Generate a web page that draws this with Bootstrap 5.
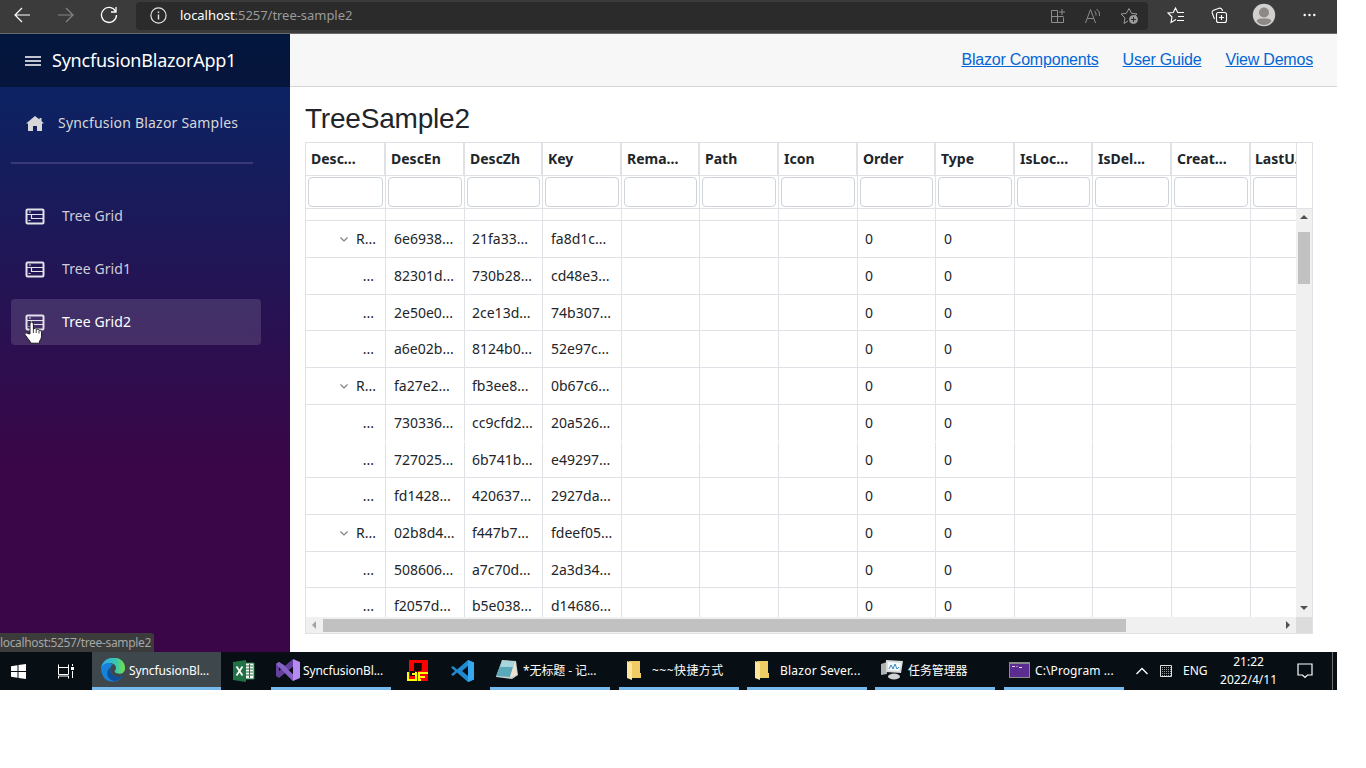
<!DOCTYPE html>
<html lang="en">
<head>
  <meta charset="UTF-8">
  <meta name="viewport" content="width=device-width, initial-scale=1.0">
  <title>TreeSample2</title>
  <link rel="stylesheet" href="https://cdn.jsdelivr.net/npm/bootstrap@5.3.0/dist/css/bootstrap.min.css">
  <style>
    body { font-family: "Noto Sans", "Noto Sans CJK SC", sans-serif; font-size: 14px; background: #fff; overflow: hidden; }
    svg { display: block; flex: none; }
    .desktop { width: 1337px; height: 690px; }

    /* Browser toolbar */
    .browser-bar { height: 34px; background: #3b3b3b; border-bottom: 1px solid #6b696b; padding: 0 20px 3px 13px; }
    .address { width: 1012px; height: 28px; margin-left: 17px; margin-top: 1px; background: #2b2b2b; border-radius: 4px; padding: 0 8px 0 14px; color: #9a9a9a; font-size: 13px; }
    .address b { color: #fff; font-weight: 400; }
    .address-url { margin-left: 13px; letter-spacing: -.04px; }

    /* Sidebar */
    .side { width: 290px; background: linear-gradient(180deg, #052767 0%, #3a0647 70%); }
    .side-top { height: 53px; background: rgba(0, 0, 0, .4); color: #fff; font-size: 18px; padding-left: 25px; gap: 11px; letter-spacing: -.22px; }
    .side-body { padding: 13px 0 0 11px; color: #d7d7d7; }
    .side-item { width: 250px; height: 46px; border-radius: 4px; padding-left: 14px; margin-bottom: 7px; gap: 17px; color: #cfcdd8; letter-spacing: .08px; }
    .side-item span, .side-home span { padding-bottom: 2px; }
    .side-item.current { background: rgba(255, 255, 255, .13); color: #fff; }
    .side-home { gap: 14px; height: 47px; padding-left: 15px; letter-spacing: .2px; }
    .side-rule { width: 242px; height: 2px; background: #39397a; margin: 15px 0 29px; }
    .pointer { left: 12px; top: 22px; }
    .status-tip { left: 0; bottom: 0; width: 154px; height: 19px; background: #3b3b3b; color: #a5a5a5; font-size: 12px; line-height: 19px; border-radius: 0 3px 0 0; letter-spacing: -.34px; white-space: nowrap; }

    /* Page */
    .top-row { height: 53px; background: #f7f7f7; border-bottom: 1px solid #d6d5d5; gap: 24px; padding-right: 24px; font: 16px "Liberation Sans", sans-serif; letter-spacing: -.2px; }
    .top-row a { color: #0366d6; }
    .page { padding: 15px 24px 0 15px; }
    .page h3 { font: 400 28px/34px "Liberation Sans", sans-serif; margin: 0 0 6px; color: #212529; letter-spacing: -.2px; }

    /* Tree grid */
    .tg { height: 492px; border: 1px solid #dee2e6; color: #212529; }
    .tg-clip { width: 990px; overflow: hidden; }
    .tg-line { display: grid; grid-template-columns: 80px 79px 78px 79px 78px 79px 79px 78px 79px 78px 79px 79px 79px; border-bottom: 1px solid #dee2e6; }
    .tg-line > div { border-right: 1px solid #dee2e6; overflow: hidden; white-space: nowrap; }
    .tg-head { height: 33px; font-weight: 700; line-height: 31px; }
    .tg-head > div { border-right-width: 2px; padding-left: 5px; }
    .tg-head > div:last-child { padding-left: 4px; }
    .tg-filter { height: 33px; padding: 0; }
    .tg-filter > div { padding: 1px 2px; }
    .tg-filter input { display: block; width: 100%; height: 30px; border: 1px solid #ced4da; border-radius: 4px; }
    .tg-headgap { border-left: 1px solid #dee2e6; border-bottom: 1px solid #dee2e6; }
    .tg-rows { height: 408px; overflow: hidden; }
    .tg-row { height: 37px; line-height: 36px; }
    .tg-row > div { padding-left: 8px; }
    .tg-row > div:nth-child(3), .tg-row > div:nth-child(8) { padding-left: 7px; }
    .tg-row.short { height: 36px; }
    .tg-row.first { height: 12px; }
    .tg-row.noline { border-bottom-color: transparent; }
    .tg-row .tree { padding: 0 9px 0 0; display: flex; justify-content: flex-end; align-items: center; gap: 8px; }
    .tg-row .leaf { padding-right: 11px; }
    .vbar { width: 16px; height: 408px; background: #f0f0f0; padding: 6px 2px 6px; }
    .vthumb { height: 52px; background: #c1c1c1; margin-top: 12px; }
    .hbar { height: 16px; background: #f0f0f0; }
    .hthumb { width: 803px; height: 13px; background: #c1c1c1; margin: 0 auto 0 6px; }
    .corner { width: 16px; height: 16px; background: #dcdcdc; margin-left: 5px; }

    /* Taskbar */
    .taskbar { height: 38px; background: #080f14; color: #fff; font-size: 12px; }
    .task { height: 38px; gap: 5px; white-space: nowrap; border-bottom: 3px solid transparent; letter-spacing: -.1px; }
    .task span { padding-top: 2px; }
    .task.open { border-bottom-color: #76b9ed; padding-left: 5px; width: 120px; margin-right: 9px; }
    .task.active { background: #3e474c; width: 129px; padding-left: 9px; margin-right: 0; gap: 4px; }
    .clock { width: 58px; line-height: 18px; text-align: center; font-size: 12px; }
    .show-desktop { width: 1px; background: #6d7073; }
  </style>
</head>
<body>
  <div class="desktop d-flex flex-column">

    <!-- Browser toolbar -->
    <div class="browser-bar d-flex align-items-center">
      <svg width="18" height="16" fill="none" stroke="#fff" stroke-width="1.2"><path d="M17 8H2M9 1L2 8l7 7"/></svg>
      <svg class="ms-4" width="20" height="16" fill="none" stroke="#858585" stroke-width="1.2"><path d="M3 8h15M11 1l7 7-7 7"/></svg>
      <svg style="margin-left:25px" width="19" height="18" fill="none" stroke="#fff" stroke-width="1.3"><path d="M15.5 5.2A7.5 7.5 0 1 0 16.5 9M16 1v5h-5"/></svg>
      <div class="address d-flex align-items-center">
        <svg width="17" height="17" fill="none" stroke="#e4e4e4" stroke-width="1.2"><circle cx="8.5" cy="8.5" r="7.6"/><path d="M8.5 7.5v5M8.5 4.5v1.6" stroke-width="1.4"/></svg>
        <span class="address-url"><b>localhost</b>:5257/tree-sample2</span>
        <svg class="ms-auto" width="17" height="16" fill="none" stroke="#8d8d8d"><path d="M7.5 2.5h-6v12h12v-5M1.5 8.5h12M7.5 2.5v12M12 1v6M9 4h6"/></svg>
        <svg style="margin-left:17px" width="19" height="16" fill="none" stroke="#8d8d8d"><path d="M1.500 15L6.500 1.500l5 13.500M3.500 10.500h6M10.500 3q2 1.500 1.500 4.500M12.500 1q4 2.500 3 7"/></svg>
        <svg style="margin-left:17px" width="20" height="18" fill="none" stroke="#9b9b9b"><path d="M8 14l-4 2.500 1-5.500-4-4 5.300-.7L9 1.500l2.500 4.800 5.500.7-2 2"/><circle cx="13.500" cy="12.500" r="4" fill="#9b9b9b"/><path d="M13.500 10v5M11 12.500h5" stroke="#2b2b2b"/></svg>
      </div>
      <svg style="margin-left:19px" width="19" height="17" fill="none" stroke="#fff" stroke-width="1.100"><path d="M9 12.500l-5 3 1-5.500-4-4 5.300-.5L8.500 1l2.200 4.500H17M11 9.500h6M10 13.500h7"/></svg>
      <svg style="margin-left:25px" width="18" height="17" fill="none" stroke="#fff" stroke-width="1.100"><rect x="5.500" y="5.500" width="10" height="10" rx="2"/><path d="M10.500 8v5M8 10.500h5M3.500 12L1.200 6q-.5-2 1.300-2.700L8 1.300q2-.6 3 1.200L11.500 4"/></svg>
      <svg style="margin-left:23px" width="24" height="24"><circle cx="12" cy="12" r="11.200" fill="#d2d0ce"/><circle cx="12" cy="9.500" r="5" fill="#8d8985"/><path d="M4.500 18q1-2.500 4-2.500h7q3 0 4 2.500-3 4-7.500 4t-7.500-4" fill="#8d8985"/></svg>
      <svg style="margin-left:27px" width="13" height="4" fill="#fff"><circle cx="1.700" cy="2" r="1.200"/><circle cx="6.500" cy="2" r="1.200"/><circle cx="11.300" cy="2" r="1.200"/></svg>
    </div>

    <div class="d-flex flex-grow-1">
      <!-- Sidebar -->
      <div class="side position-relative">
        <div class="side-top d-flex align-items-center">
          <svg width="16" height="12" stroke="#fff" stroke-width="1.500"><path d="M0 2h16M0 6h16M0 10h16"/></svg>
          <span>SyncfusionBlazorApp1</span>
        </div>
        <div class="side-body">
          <div class="side-home d-flex align-items-center">
            <svg width="18" height="16" fill="#d7d7d7"><path d="M9 0L0 7.500h2V15h5v-5h4v5h5V7.500h2L15.500 5V2h-2v1.500z"/></svg>
            <span>Syncfusion Blazor Samples</span>
          </div>
          <div class="side-rule"></div>
          <div id="menu"></div>
        </div>
        <div class="status-tip position-absolute">localhost:5257/tree-sample2</div>
      </div>

      <!-- Page content -->
      <div class="flex-grow-1">
        <div class="top-row d-flex align-items-center justify-content-end">
          <a href="#">Blazor Components</a>
          <a href="#">User Guide</a>
          <a href="#">View Demos</a>
        </div>
        <div class="page">
          <h3>TreeSample2</h3>
          <div class="tg">
            <div class="d-flex">
              <div class="tg-clip">
                <div class="tg-line tg-head" id="tg-head"></div>
                <div class="tg-line tg-filter" id="tg-filter"></div>
              </div>
              <div class="tg-headgap flex-grow-1"></div>
            </div>
            <div class="d-flex">
              <div class="tg-clip tg-rows" id="tg-rows"></div>
              <div class="vbar d-flex flex-column">
                <svg class="mx-auto" width="8" height="5" fill="#505050"><path d="M0 4l4-4 4 4z"/></svg>
                <div class="vthumb"></div>
                <svg class="mx-auto mt-auto" width="8" height="5" fill="#505050"><path d="M0 0h8L4 4z"/></svg>
              </div>
            </div>
            <div class="hbar d-flex align-items-center">
              <svg style="margin-left:6px" width="5" height="8" fill="#a3a3a3"><path d="M4 0v8L0 4z"/></svg>
              <div class="hthumb"></div>
              <svg width="5" height="8" fill="#505050"><path d="M0 0l4 4-4 4z"/></svg>
              <div class="corner"></div>
            </div>
          </div>
        </div>
      </div>
    </div>

    <!-- Taskbar -->
    <div class="taskbar d-flex align-items-center">
      <svg style="margin-left:11px" width="15" height="15" fill="#fff"><path d="M0 2.200L6.500 1.300V7H0zM7.500 1.100L15 0v7H7.500zM0 8h6.500v5.700L0 12.800zM7.500 8H15v7l-7.500-1.100z"/></svg>
      <svg style="margin-left:31px" width="18" height="15" fill="none" stroke="#fff"><path d="M1.500 3V.5M11.500 3V.5M1 3.500h11M1.500 3.500v7h10v-7M1.500 14.500v-2.500h10v2.500M15.500 0v2M15.500 7v7"/><path d="M14 3h3v3h-3z" fill="#fff" stroke="none"/></svg>

      <div class="task open active d-flex align-items-center" style="margin-left:17px">
        <svg width="24" height="24" viewBox="0 0 24 24">
          <defs>
            <linearGradient id="eg1"><stop stop-color="#2fa8ee"/><stop offset=".6" stop-color="#37c5b5"/><stop offset="1" stop-color="#72e244"/></linearGradient>
          </defs>
          <path d="M0 11C1-4 24-4 24 10c0 5-4 7-9 5-3-2 0-2 0-5 0-7-13-6-15 1z" fill="url(#eg1)"/>
          <path d="M0 11c1-6 9-8 12-4-4 1-4 8 1 11 3 2 7 1 9 0-5 8-17 7-20 0Q0 15 0 11z" fill="#1683d8"/>
          <path d="M9 10c-5 3-3 12 4 13 4 0 8-3 9-5-6 3-14-1-13-8z" fill="#104f9c"/>
        </svg>
        <span>SyncfusionBl...</span>
      </div>

      <svg style="margin-left:12px" width="22" height="22"><path d="M12 3h9v16h-9z" fill="#f5f5f5" stroke="#207245"/><path d="M13 6h7M13 9h7M13 12h7M13 15h7M16.500 4v14" stroke="#207245"/><path d="M0 2l13-2v22L0 20z" fill="#207245"/><path d="M3.500 6.500l6 9M9.500 6.500l-6 9" stroke="#fff" stroke-width="1.800"/></svg>

      <div class="task open d-flex align-items-center" style="margin-left:16px;gap:3px">
        <svg width="24" height="22" viewBox="0 0 24 22"><path d="M0 5l3-2 16 14-2 5z" fill="#8661c5"/><path d="M0 5v12l3 2L19 6l-2-6L3 12V7z" fill="#63409d"/><path d="M17 0l7 3v16l-7 3z" fill="#b58af2"/><path d="M3 3l5 3 9 10v6L0 5z" fill="#8661c5"/></svg>
        <span>SyncfusionBl...</span>
      </div>

      <!-- Red app with the yellow marks -->
      <svg style="margin-left:6px" width="23" height="22"><path d="M3 0h19v21H3z" fill="#f00"/><path d="M8 3h7v8H8zM4 11h5v5H4z" fill="#15080a"/><path d="M15 3v7M11 10v3" stroke="#15080a" stroke-width="1.500"/><path d="M2 12v8h8v-8M6 14h4M13 21v-8h9M13 17h6M12 20h3" fill="none" stroke="#ff0" stroke-width="2"/></svg>
      <svg style="margin-left:22px" width="24" height="22"><path d="M17 0l6 2.500v17L17 22 6 12.500 2 16l-2-1.500 4-3.500-4-3.500L2 6l4 3.500zM17 6l-6 5 6 5z" fill="#1f8ad2"/><path d="M17 0l6 2.500v17L17 22z" fill="#35a8f0"/></svg>

      <div class="task open d-flex align-items-center" style="margin-left:15px">
        <svg width="23" height="21"><path d="M7 1l14 1 2 14-6 4-16-2z" fill="#c9d3d6"/><path d="M7 2h13l-5 16-14-1z" fill="#5ba8b9"/><path d="M7 2h13l-2 6H5z" fill="#a7d4dd"/><path d="M20 2l2 14-7 2z" fill="#ece2cd"/></svg>
        <span>*无标题 - 记...</span>
      </div>
      <div class="task open d-flex align-items-center" style="padding-left:8px;gap:11px;letter-spacing:.45px">
        <svg width="14" height="20"><path d="M2 1h11v12h1v5H5z" fill="#f0cc67"/><path d="M0 1l5 2v17l-5-2z" fill="#ffe69b"/></svg>
        <span>~~~快捷方式</span>
      </div>
      <div class="task open d-flex align-items-center" style="padding-left:8px;gap:11px;margin-left:-1px;letter-spacing:.22px">
        <svg width="14" height="20"><path d="M2 1h11v12h1v5H5z" fill="#f0cc67"/><path d="M0 1l5 2v17l-5-2z" fill="#ffe69b"/></svg>
        <span>Blazor Sever...</span>
      </div>
      <div class="task open d-flex align-items-center" style="margin-left:-1px">
        <svg width="23" height="20"><path d="M1 4l6-2v12l-6 1z" fill="#aeb2b0"/><path d="M6 0l17 1-2 12-15-1z" fill="#d9dcda"/><path d="M8 2l13 1-2 8-11-1z" fill="#f4faff"/><path d="M9 9l2-4 2 4 2-5 2 5 2-2" fill="none" stroke="#3689c9"/><ellipse cx="14" cy="16.500" rx="6" ry="3" fill="#cfd2d0"/></svg>
        <span>任务管理器</span>
      </div>
      <div class="task open d-flex align-items-center" style="letter-spacing:.1px">
        <svg width="21" height="16"><path d="M0 0h21v16H0z" fill="#8a8a8a"/><path d="M1 2h19v13H1z" fill="#5c2d91"/><path d="M3 4.500h3M7.500 4.500h1M10 5.500h3" stroke="#e4d9f0"/></svg>
        <span>C:\Program ...</span>
      </div>

      <svg style="margin-left:3px" width="12" height="8" fill="none" stroke="#fff" stroke-width="1.300"><path d="M.5 7L6 1.500 11.500 7"/></svg>
      <svg style="margin-left:12px" width="12" height="12"><defs><pattern id="dots" width="2" height="2" patternUnits="userSpaceOnUse"><path d="M0 0h1v1H0z" fill="#999"/></pattern></defs><path d="M.5.5h11v11H.5z" fill="url(#dots)" stroke="#e0e0e0"/></svg>
      <span style="margin-left:11px">ENG</span>
      <div class="clock" style="margin-left:12px">21:22<br>2022/4/11</div>
      <svg style="margin-left:19px" width="16" height="16" fill="none" stroke="#fff" stroke-width="1.200"><path d="M1 1h14v11h-4.500L8 14.500 5.500 12H1z"/></svg>
      <div class="show-desktop align-self-stretch" style="margin-left:19px"></div>
    </div>
  </div>

  <script src="https://cdn.jsdelivr.net/npm/bootstrap@5.3.0/dist/js/bootstrap.bundle.min.js"></script>
  <script>
    const columns = ["Desc...", "DescEn", "DescZh", "Key", "Rema...", "Path", "Icon", "Order", "Type", "IsLoc...", "IsDel...", "Creat...", "LastU."];

    // parent, DescEn, DescZh, Key, extra row class
    const rows = [
      [false, "", "", "", "first"],
      [true, "6e6938...", "21fa33...", "fa8d1c...", ""],
      [false, "82301d...", "730b28...", "cd48e3...", ""],
      [false, "2e50e0...", "2ce13d...", "74b307...", "short"],
      [false, "a6e02b...", "8124b0...", "52e97c...", ""],
      [true, "fa27e2...", "fb3ee8...", "0b67c6...", ""],
      [false, "730336...", "cc9cfd2...", "20a526...", "noline"],
      [false, "727025...", "6b741b...", "e49297...", "short"],
      [false, "fd1428...", "420637...", "2927da...", ""],
      [true, "02b8d4...", "f447b7...", "fdeef05...", ""],
      [false, "508606...", "a7c70d...", "2a3d34...", "short"],
      [false, "f2057d...", "b5e038...", "d14686...", ""]
    ];

    const chevron = '<svg width="8" height="5" fill="none" stroke="#7b8187" stroke-width="1.200"><path d="M.5.5L4 4 7.500.5"/></svg>';
    const gridIcon = '<svg width="20" height="17" fill="none" stroke="#e3e1ea"><rect x="1.500" y="1.500" width="17" height="14" rx="1" stroke-width="2"/><path d="M2 6.500h16M6.500 7v3.500H18M4 4h2M3.500 12.500h2" stroke-width="1.200"/></svg>';
    const hand = '<svg class="pointer position-absolute" width="22" height="24"><path d="M7 13V3q0-2 1.700-2t1.700 2v5q2-1.500 2.800.5 2-1 2.800.7 2.500-.6 2.500 2v4q0 3-2 5v2H8q-1-2-3-4.500L1.500 13q1.500-2 3.500-.5z" fill="#fff" stroke="#111" stroke-width=".9"/><path d="M10.400 8v4M13.200 9v3M16 10v2.500" stroke="#111" stroke-width=".8"/></svg>';

    // Menu
    document.getElementById("menu").innerHTML = ["Tree Grid", "Tree Grid1", "Tree Grid2"].map((name, i) => `
      <div class="side-item d-flex align-items-center position-relative ${i === 2 ? "current" : ""}">
        ${gridIcon}<span>${name}</span>${i === 2 ? hand : ""}
      </div>`).join("");

    // Header and filter row
    document.getElementById("tg-head").innerHTML = columns.map(c => `<div>${c}</div>`).join("");
    document.getElementById("tg-filter").innerHTML = columns.map(() => '<div><input type="text"></div>').join("");

    // Data rows
    document.getElementById("tg-rows").innerHTML = rows.map(([parent, en, zh, key, cls]) => {
      const blank = cls === "first";
      const num = blank ? "" : "0";
      const tree = blank ? "" : parent ? chevron + "<span>R...</span>" : "<span>...</span>";
      const cells = [en, zh, key, "", "", "", num, num, "", "", "", ""];
      return `<div class="tg-line tg-row ${cls}"><div class="tree ${parent ? "" : "leaf"}">${tree}</div>${cells.map(v => `<div>${v}</div>`).join("")}</div>`;
    }).join("");
  </script>
</body>
</html>
